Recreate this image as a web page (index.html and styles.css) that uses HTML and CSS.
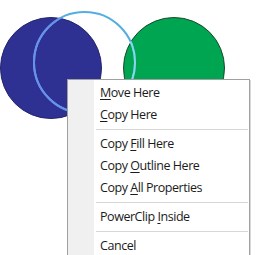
FILE: index.html
```html
<!DOCTYPE html>
<html>
<head>
<meta charset="utf-8">
<link rel="stylesheet" href="styles.css">
</head>
<body>
<div class="canvas">
  <svg class="shapes" width="268" height="255" viewBox="0 0 268 255">
    <defs>
      <clipPath id="inBlue"><circle cx="51" cy="68" r="51"/></clipPath>
      <clipPath id="inGreen"><circle cx="174" cy="68" r="51"/></clipPath>
    </defs>
    <circle cx="51" cy="68" r="50.5" fill="#2e3192" stroke="#23256e" stroke-width="1"/>
    <circle cx="174" cy="68" r="50.5" fill="#00a551" stroke="#1b4a2c" stroke-width="1"/>
    <circle cx="84.5" cy="62.5" r="50.5" fill="none" stroke="#55ade0" stroke-width="2"/>
    <circle cx="84.5" cy="62.5" r="50.5" fill="none" stroke="#6a90ec" stroke-width="2" clip-path="url(#inBlue)"/>
    <circle cx="84.5" cy="62.5" r="50.5" fill="none" stroke="#86d8ea" stroke-width="2" clip-path="url(#inGreen)"/>
  </svg>
  <div class="menu">
    <div class="item"><span class="u">M</span>ove Here</div>
    <div class="item"><span class="u">C</span>opy Here</div>
    <div class="sep"></div>
    <div class="item">Copy <span class="u">F</span>ill Here</div>
    <div class="item">Copy <span class="u">O</span>utline Here</div>
    <div class="item">Copy <span class="u">A</span>ll Properties</div>
    <div class="sep"></div>
    <div class="item">PowerClip <span class="u">I</span>nside</div>
    <div class="sep"></div>
    <div class="item">Cancel</div>
  </div>
</div>
</body>
</html>
```
FILE: styles.css
```css
html, body {
  margin: 0;
  padding: 0;
  background: #ffffff;
  overflow: hidden;
}
.canvas {
  position: relative;
  width: 268px;
  height: 255px;
  overflow: hidden;
  font-family: "Open Sans", "Noto Sans", "Liberation Sans", sans-serif;
}
.shapes {
  position: absolute;
  left: 0;
  top: 0;
  display: block;
}
.menu {
  position: absolute;
  left: 67px;
  top: 79px;
  width: 181px;
  border: 1px solid #a0a0a0;
  background: linear-gradient(to right, #f0f0f0 0, #f0f0f0 26px, #ffffff 26px);
  padding: 2px 0 4px 0;
  box-shadow: 1px 1px 0 #d8d8d8;
}
.item {
  height: 22px;
  line-height: 22px;
  padding-left: 32px;
  font-size: 12.5px;
  letter-spacing: -0.45px;
  color: #1b1b1b;
  white-space: nowrap;
}
.u {
  text-decoration: underline;
  text-underline-offset: 2px;
}
.sep {
  height: 1px;
  background: #d7d7d7;
  margin: 3px 1px 3px 28px;
}
```
